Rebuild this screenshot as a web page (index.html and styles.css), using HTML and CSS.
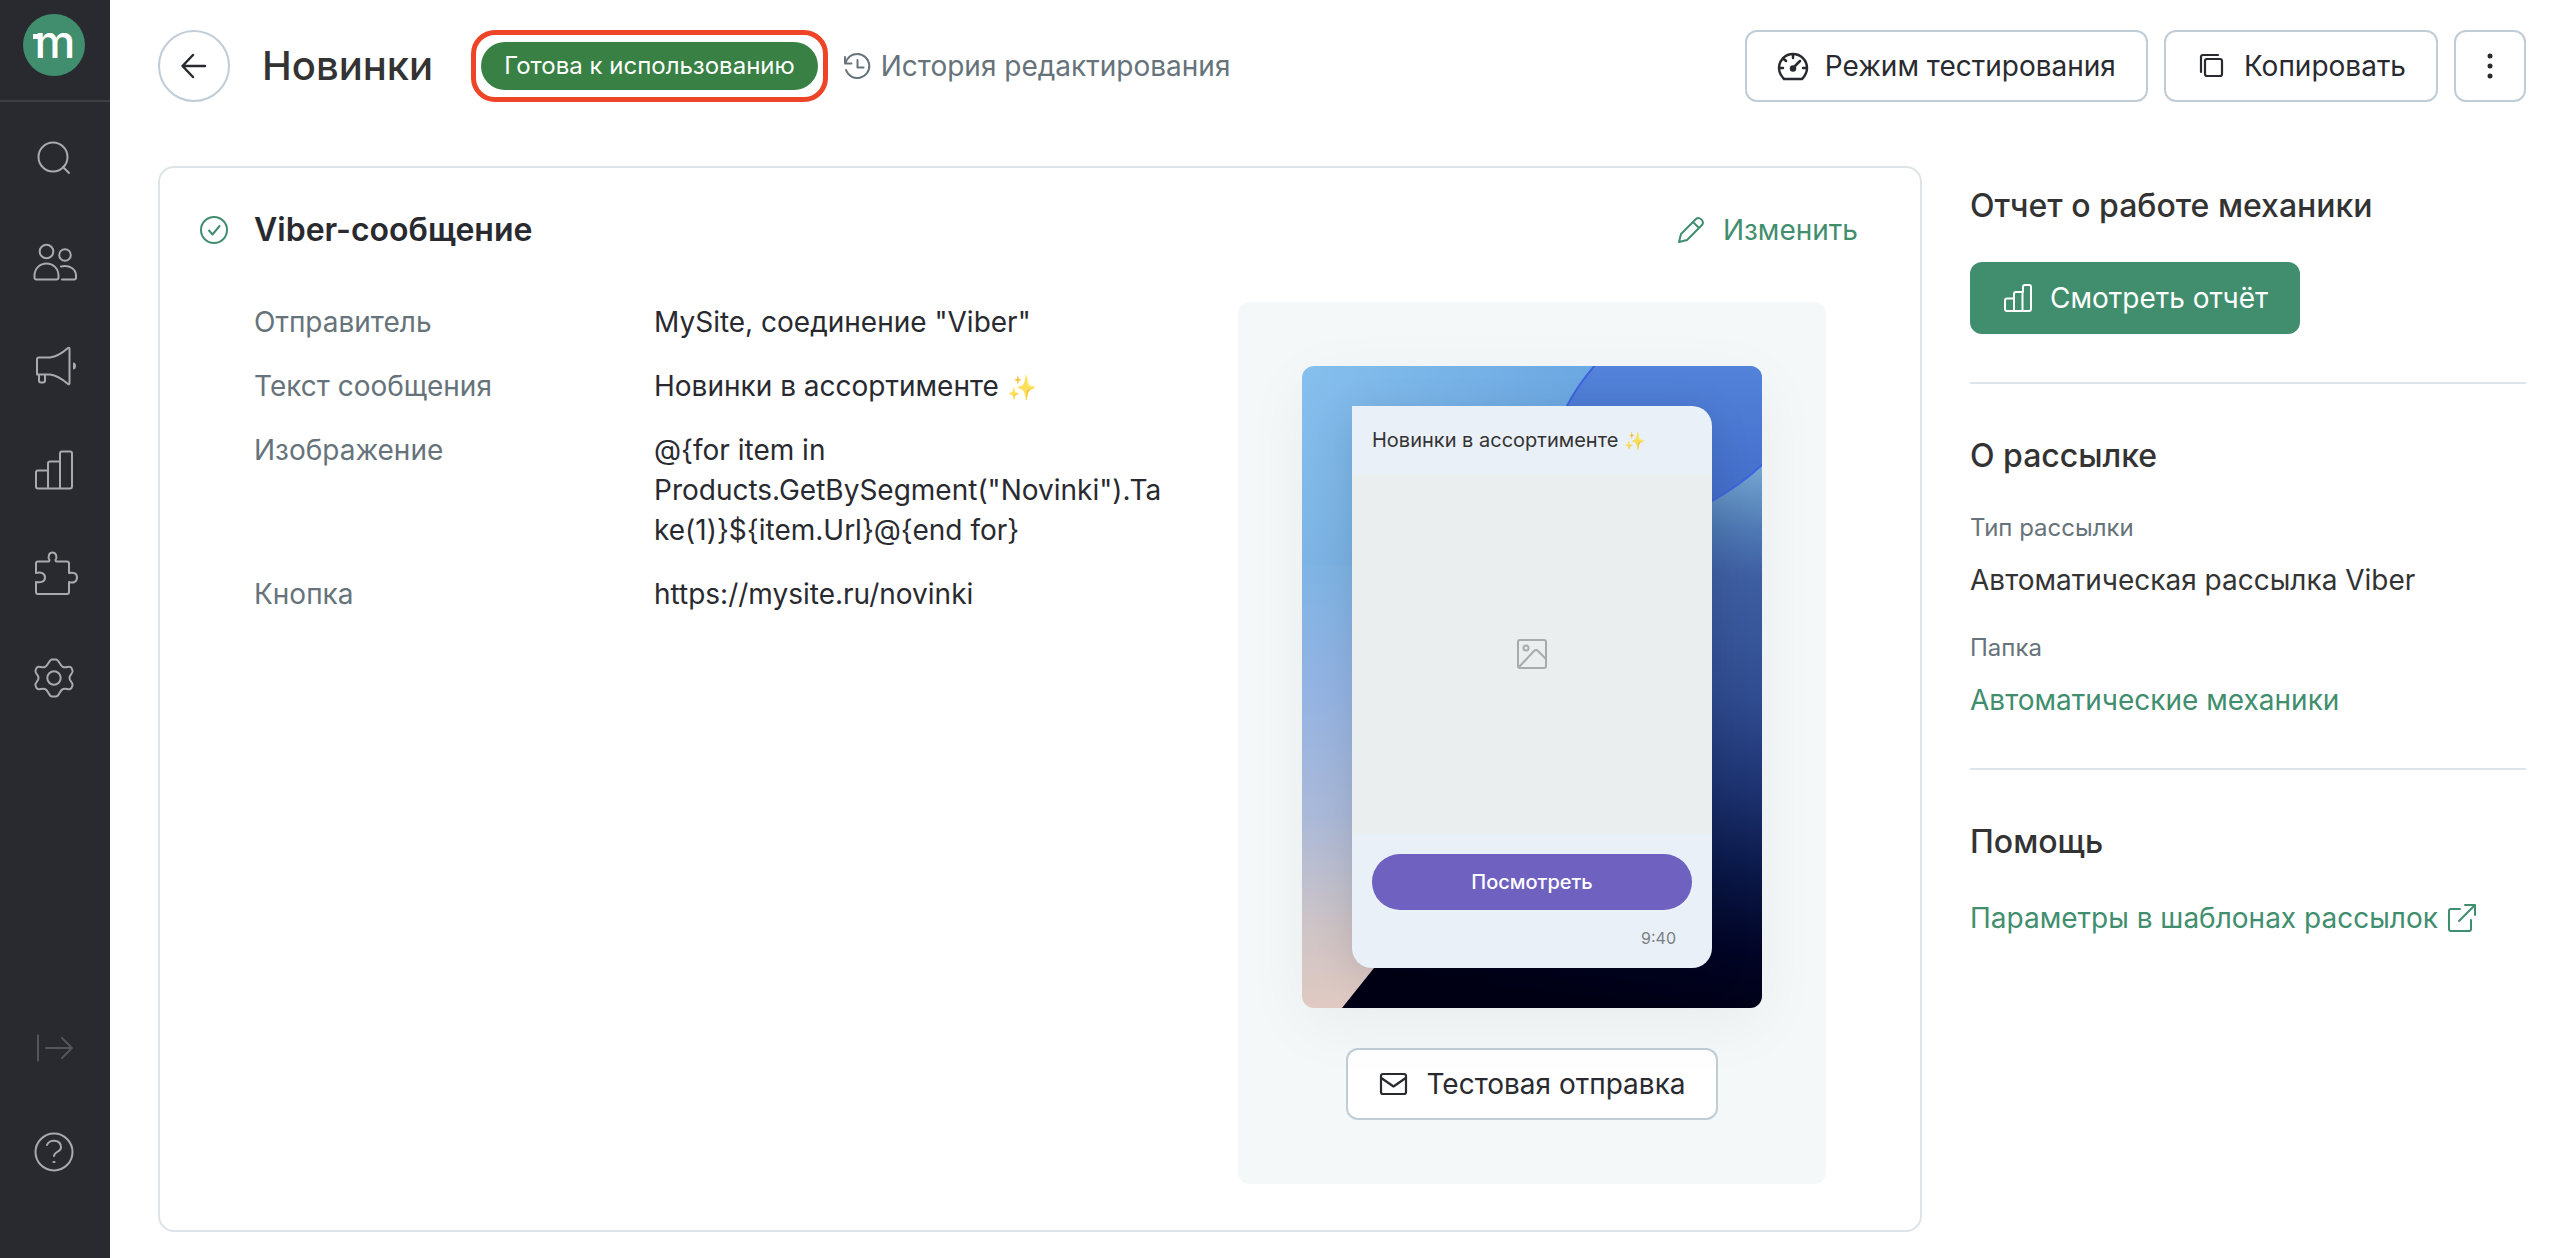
FILE: index.html
```html
<!DOCTYPE html>
<html lang="ru">
<head>
<meta charset="utf-8">
<meta name="viewport" content="width=device-width, initial-scale=1">
<title>Новинки</title>
<link rel="stylesheet" href="styles.css">
</head>
<body>
<aside class="sidebar">
  <a class="logo" href="#" aria-label="Главная">
    <svg width="62" height="62" viewBox="0 0 62 62"><circle cx="31" cy="31" r="31" fill="#418e6e"/><path d="M10 20h8v5h-8z" fill="#fff"/><text x="32" y="44" text-anchor="middle" class="logo-letter">m</text></svg>
  </a>
  <nav class="nav">
    <a class="nav-item" href="#" aria-label="Поиск"><svg class="icon-nav" viewBox="0 0 48 48"><circle cx="23" cy="23" r="14.5"/><path d="M33 33l6 6"/></svg></a>
    <a class="nav-item" href="#" aria-label="Клиенты"><svg class="icon-nav" viewBox="0 0 48 48"><circle cx="16.500" cy="13.500" r="6.800"/><circle cx="35" cy="17" r="5.800"/><path d="M6.500 41.500q-2 0-2-2v-2c0-7 5.500-12 12-12s12 5 12 12v2q0 2-2 2zM31 28.500c9-2 15 3 15 9v2q0 2-2 2H32"/></svg></a>
    <a class="nav-item" href="#" aria-label="Кампании"><svg class="icon-nav" viewBox="0 0 48 48"><path d="M7 17.500q0-2 2-2h11c8-1 14-6 18-9.500q1.500-1 1.500 1v34q0 2-1.500 1c-4-3.500-11-8.500-18-9.500H7zM9 32.500v6q0 2 2 2h2q2 0 2-2v-6"/><path d="M43 20.500v7c4 0 4-7 0-7z" class="icon-fill"/></svg></a>
    <a class="nav-item" href="#" aria-label="Отчёты"><svg class="icon-nav" viewBox="0 0 48 48"><path d="M18 24.500H8q-2 0-2 2v14q0 2 2 2h32q2 0 2-2v-33q0-2-2-2h-8q-2 0-2 2v8H20q-2 0-2 2v25M30 15v27.500"/></svg></a>
    <a class="nav-item" href="#" aria-label="Интеграции"><svg class="icon-nav" viewBox="0 0 48 48"><path d="M8 11.500h10.500c1 0 1-.500 1-1.500-2-3-.500-7.500 3-7.500s5 4.500 3 7.500c0 1 0 1.500 1 1.500H37q2 0 2 2v9.500c4-1 8 0 8 4.500s-4 6-8 4.500v10q0 2-2 2H8q-2 0-2-2V32c5 1 9-.500 9-4.500s-4-6-9-4.500v-9.500q0-2 2-2z"/></svg></a>
    <a class="nav-item" href="#" aria-label="Настройки"><svg class="icon-nav" viewBox="0 0 48 48"><circle cx="24" cy="24" r="6.700"/><path d="M22 5.500h4c3 0 3.500 6 7 7.500 3 1.500 7-2 8.500 1l1 2.500c1 3-3 4-3 7.500s4 4.500 3 7.500l-1 2.500c-1.500 3-5.500-.500-8.500 1-3.500 1.500-4 7.500-7 7.500h-4c-3 0-3.500-6-7-7.500-3-1.500-7 2-8.500-1l-1-2.500c-1-3 3-4 3-7.500s-4-4.500-3-7.500l1-2.500c1.500-3 5.500.500 8.500-1 3.500-1.500 4-7.500 7-7.500z"/></svg></a>
  </nav>
  <div class="nav nav-bottom">
    <button class="nav-item nav-item-muted" type="button" aria-label="Развернуть меню"><svg class="icon-nav" viewBox="0 0 48 48"><path d="M8 11.500v25M16 24h26M32 14l10 10-10 10"/></svg></button>
    <a class="nav-item" href="#" aria-label="Справка"><svg class="icon-nav" viewBox="0 0 48 48"><circle cx="24" cy="24" r="18.500"/><path d="M17 17c2-6 14-6 14 2.500 0 4.500-7 4-7 8.500M23.500 34h1"/></svg></a>
  </div>
</aside>

<main class="main">
  <header class="header">
    <a class="back" href="#" aria-label="Назад"><svg width="32" height="32" viewBox="0 0 32 32" class="icon icon-bold"><path d="M27 16H5M15 5L4.500 16 15 27"/></svg></a>
    <h1 class="title">Новинки</h1>
    <div class="highlight"><span class="status">Готова к использованию</span></div>
    <a class="history" href="#"><svg width="32" height="32" viewBox="0 0 32 32" class="icon"><path d="M4 7v6.500h6.500M4.500 13c2-6 6.500-9 12-9a12 12 0 1 1-11.500 16M16.500 10v7.500h6"/></svg>История редактирования</a>
    <div class="actions">
      <button class="button" type="button"><svg width="32" height="32" viewBox="0 0 32 32" class="icon icon-bold"><path d="M7 29h18c3-3 5-6 5-11a14 14 0 0 0-28 0c0 5 2 8 5 11zM16 4v4M6 8l3 3M2 18h4M26 18h4M16 18l7-7"/><circle cx="16" cy="18.500" r="2" fill="currentColor"/></svg>Режим тестирования</button>
      <button class="button" type="button"><svg width="32" height="32" viewBox="0 0 32 32" class="icon icon-dark"><path d="M5 22V7q0-2 2-2h15"/><rect x="9" y="9" width="17" height="17" rx="2"/></svg>Копировать</button>
      <button class="button button-square" type="button" aria-label="Ещё"><svg width="32" height="32" viewBox="0 0 32 32" fill="currentColor"><circle cx="16" cy="6" r="2.500"/><circle cx="16" cy="16" r="2.500"/><circle cx="16" cy="26" r="2.500"/></svg></button>
    </div>
  </header>

  <div class="content">
    <section class="card">
      <header class="card-header">
        <svg width="32" height="32" viewBox="0 0 32 32" class="icon icon-green"><circle cx="16" cy="16" r="13"/><path d="M11 16.500l3.500 4 7-8.500"/></svg>
        <h2 class="card-title">Viber-сообщение</h2>
        <a class="edit" href="#"><svg width="32" height="32" viewBox="0 0 32 32" class="icon"><path d="M4 28l2-8L21 5c3-3 9 2 6 6L12 26zM18 8l6 6"/></svg>Изменить</a>
      </header>
      <div class="card-body">
        <dl class="params">
          <dt>Отправитель</dt><dd>MySite, соединение "Viber"</dd>
          <dt>Текст сообщения</dt><dd>Новинки в ассортименте <span class="emoji">✨</span></dd>
          <dt>Изображение</dt><dd>@{for item in Products.GetBySegment("Novinki").Take(1)}${item.Url}@{end for}</dd>
          <dt>Кнопка</dt><dd>https://mysite.ru/novinki</dd>
        </dl>
        <div class="preview">
          <div class="phone">
            <svg class="wallpaper" viewBox="0 0 460 642" preserveAspectRatio="none" aria-hidden="true">
              <defs>
                <linearGradient id="sky" x1="0" y1="0" x2="0" y2="1">
                  <stop offset="0" stop-color="#86c0ee"/><stop offset=".3" stop-color="#7db4e4"/><stop offset=".5" stop-color="#93b3e3"/><stop offset=".7" stop-color="#aab9d8"/><stop offset=".88" stop-color="#cfc4c6"/><stop offset="1" stop-color="#e0c9c1"/>
                </linearGradient>
                <linearGradient id="glow" x1="0" y1="0" x2="1" y2="0">
                  <stop offset="0" stop-color="#68a4e0" stop-opacity="0"/><stop offset=".7" stop-color="#68a4e0"/>
                </linearGradient>
                <linearGradient id="night" gradientUnits="userSpaceOnUse" x1="440" y1="100" x2="380" y2="642">
                  <stop offset="0" stop-color="#75a5d0"/><stop offset=".11" stop-color="#4f7ab4"/><stop offset=".2" stop-color="#3e5ea2"/><stop offset=".42" stop-color="#304c90"/><stop offset=".58" stop-color="#1e3472"/><stop offset=".74" stop-color="#0a1848"/><stop offset=".88" stop-color="#020526"/><stop offset="1" stop-color="#000016"/>
                </linearGradient>
                <linearGradient id="orb" x1="0" y1="0" x2="0" y2="1">
                  <stop offset="0" stop-color="#5383da"/><stop offset="1" stop-color="#4069c6"/>
                </linearGradient>
              </defs>
              <path d="M0 0h460v642H0z" fill="url(#sky)"/>
              <path d="M0 0h460v200H0z" fill="url(#glow)"/>
              <path d="M460 80L380 150Q260 280 72 602L40 642H460z" fill="url(#night)"/>
              <path d="M294 -2Q275 20 265 40C230 120 300 200 410 135Q440 118 462 97V-2z" fill="url(#orb)" stroke="#3e63dc" stroke-width="2"/>
            </svg>
            <div class="message">
              <p class="message-text">Новинки в ассортименте <span class="emoji">✨</span></p>
              <div class="message-image"><svg width="32" height="32" viewBox="0 0 32 32" class="icon"><rect x="2" y="2" width="28" height="28" rx="2"/><circle cx="10" cy="10" r="2.500"/><path d="M3 29l15-16q2-2 4 0l8 8"/></svg></div>
              <button class="message-button" type="button">Посмотреть</button>
              <time class="message-time">9:40</time>
            </div>
          </div>
          <button class="button" type="button"><svg width="32" height="32" viewBox="0 0 32 32" class="icon icon-dark"><rect x="3" y="6" width="25" height="20" rx="2"/><path d="M4 10.500l11.500 8 11.500-8"/></svg>Тестовая отправка</button>
        </div>
      </div>
    </section>

    <aside class="info">
      <section class="info-section">
        <h2 class="info-title">Отчет о работе механики</h2>
        <button class="button button-primary" type="button"><svg width="32" height="32" viewBox="0 0 32 32" class="icon"><path d="M11 16.500H5q-2 0-2 2V27q0 2 2 2h22q2 0 2-2V5q0-2-2-2h-4q-2 0-2 2v5h-7q-2 0-2 2v17M20.500 10v19"/></svg>Смотреть отчёт</button>
      </section>
      <section class="info-section">
        <h2 class="info-title">О рассылке</h2>
        <dl class="facts">
          <div class="fact"><dt>Тип рассылки</dt><dd>Автоматическая рассылка Viber</dd></div>
          <div class="fact"><dt>Папка</dt><dd><a class="link" href="#">Автоматические механики</a></dd></div>
        </dl>
      </section>
      <section class="info-section">
        <h2 class="info-title">Помощь</h2>
        <a class="link" href="#">Параметры в шаблонах рассылок<svg width="32" height="32" viewBox="0 0 32 32" class="icon"><path d="M14 7H5q-2 0-2 2v18q0 2 2 2h18q2 0 2-2v-9M13 19L29 3M19 3h10v10"/></svg></a>
      </section>
    </aside>
  </div>
</main>
</body>
</html>
```
FILE: styles.css
```css
* { box-sizing: border-box; }

body {
  margin: 0;
  display: flex;
  min-height: 100vh;
  background: #fff;
  color: #292a2f;
  font: 400 28px/40px Inter, "Noto Sans", sans-serif;
}

h1, h2, p, dl, dd { margin: 0; }
a { color: inherit; text-decoration: none; }
button { font: inherit; color: inherit; cursor: pointer; }

.icon { flex: none; fill: none; stroke: currentColor; stroke-width: 2; stroke-linecap: round; stroke-linejoin: round; }
.icon-bold { stroke-width: 2.5; }
.icon-dark { stroke-width: 2.2; }
.icon-green { color: #418e6e; }
.emoji { font-size: 86%; line-height: 1; opacity: .8; }

/* Sidebar */
.sidebar {
  flex: none;
  display: flex;
  flex-direction: column;
  width: 110px;
  padding-bottom: 54px;
  background: #292a2f;
}
.logo { display: flex; padding: 14px 0 24px 23px; border-bottom: 2px solid #3e3f44; }
.logo-letter { font: 500 46px Inter, sans-serif; fill: #fff; }
.nav { display: flex; flex-direction: column; padding-top: 4px; }
.nav-bottom { margin-top: auto; }
.nav-item {
  display: flex;
  align-items: center;
  justify-content: center;
  height: 104px;
  padding: 0 2px 0 0;
  border: 0;
  background: none;
  color: #a9aaac;
}
.nav-item-muted { color: #54555a; }
.icon-nav { width: 48px; height: 48px; fill: none; stroke: currentColor; stroke-width: 2; stroke-linecap: round; stroke-linejoin: round; }
.icon-fill { fill: currentColor; stroke: none; }

/* Page header */
.main { flex: 1; min-width: 0; padding: 30px 46px 26px 48px; }
.header { display: flex; align-items: center; margin-bottom: 64px; }
.back {
  display: flex;
  align-items: center;
  justify-content: center;
  width: 72px;
  height: 72px;
  border: 2px solid #c0ccd6;
  border-radius: 50%;
}
.title { margin-left: 32px; font-size: 40px; line-height: 48px; font-weight: 500; color: #333; }
.highlight { margin-left: 38px; padding: 7px 5px; border: 5px solid #ee4427; border-radius: 24px; }
.status {
  display: block;
  padding: 0 23px;
  border-radius: 24px;
  background: #388044;
  color: #fff;
  font-size: 24px;
  line-height: 48px;
}
.history { display: flex; align-items: center; gap: 8px; margin-left: 13px; color: #66737a; }
.actions { display: flex; gap: 16px; margin-left: auto; }
.button {
  display: inline-flex;
  align-items: center;
  gap: 16px;
  height: 72px;
  padding: 0 30px;
  border: 2px solid #c0ccd6;
  border-radius: 12px;
  background: #fff;
}
.button-square { width: 72px; padding: 0 18px; }
.button-primary { border-color: #418e6e; background: #418e6e; color: #fff; }

/* Content */
.content { display: grid; grid-template-columns: minmax(0, 1fr) 556px; gap: 48px; }
.card { padding: 40px 94px 46px 38px; border: 2px solid #dce4e8; border-radius: 16px; }
.card-header { display: flex; align-items: center; height: 44px; margin-right: -32px; }
.card-title { margin-left: 24px; font-size: 32px; font-weight: 600; }
.edit { display: flex; align-items: center; gap: 16px; margin-left: auto; color: #418e6e; }
.card-body { display: grid; grid-template-columns: minmax(0, 1fr) 588px; gap: 72px; margin: 50px 0 0 56px; }
.params { display: grid; grid-template-columns: 400px minmax(0, 1fr); gap: 24px 0; align-content: start; }
.params dt { color: #66737a; }
.params dd { overflow-wrap: anywhere; }

/* Message preview */
.preview {
  display: flex;
  flex-direction: column;
  align-items: center;
  gap: 40px;
  padding: 64px;
  border-radius: 12px;
  background: #f4f8f9;
}
.phone {
  position: relative;
  width: 100%;
  padding: 40px 50px;
  border-radius: 12px;
  box-shadow: 0 16px 64px rgba(0, 0, 0, .05);
}
.wallpaper { position: absolute; inset: 0; width: 100%; height: 100%; border-radius: 12px; }
.message {
  position: relative;
  display: flex;
  flex-direction: column;
  border-radius: 0 20px 20px 20px;
  background: #e9f0f7;
  color: #333;
  box-shadow: 0 8px 40px rgba(0, 0, 0, .12);
}
.message-text { padding: 20px; font-size: 20px; line-height: 28px; }
.message-image {
  display: flex;
  align-items: center;
  justify-content: center;
  aspect-ratio: 1;
  background: #ebeeef;
  color: #a9aaac;
}
.message-button {
  margin: 20px 20px 16px;
  padding: 0;
  border: 0;
  border-radius: 28px;
  background: #6e61bf;
  color: #fff;
  font-size: 20px;
  line-height: 56px;
  font-weight: 500;
}
.message-time { padding: 0 36px 18px; text-align: right; font-size: 16px; line-height: 24px; color: #7a7f84; }

/* Right column */
.info-section { display: flex; flex-direction: column; align-items: flex-start; padding: 48px 0; border-bottom: 2px solid #dce4e8; }
.info-section:first-child { padding-top: 16px; }
.info-section:last-child { border-bottom: 0; }
.info-title { margin: 4px 0 36px; font-size: 32px; line-height: 40px; font-weight: 500; color: #333; }
.facts { display: grid; gap: 28px; margin-top: -4px; color: #333; }
.fact { display: grid; gap: 12px; }
.fact dt { font-size: 24px; color: #66737a; }
.link { display: flex; align-items: center; gap: 8px; color: #418e6e; }
```
